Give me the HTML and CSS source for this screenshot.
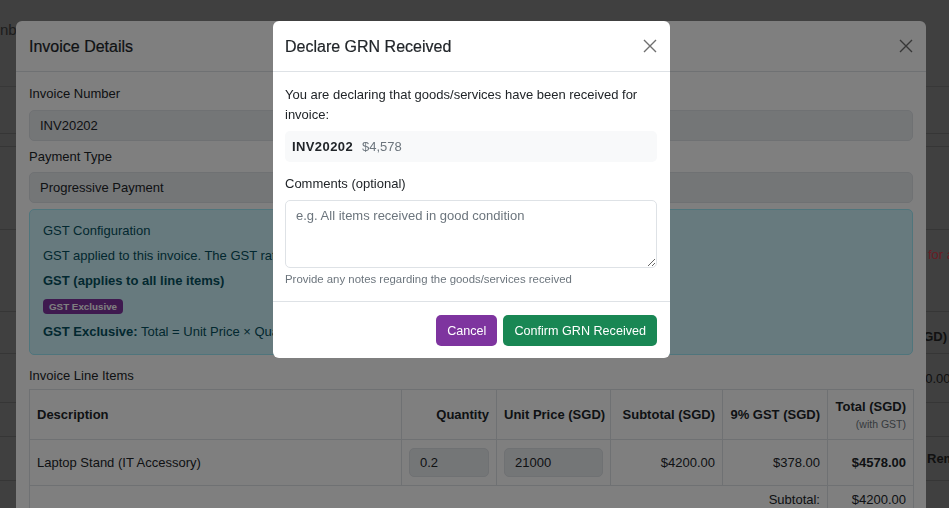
FILE: index.html
```html
<!DOCTYPE html>
<html lang="en">
<head>
<meta charset="utf-8">
<title>Declare GRN Received</title>
<link rel="stylesheet" href="styles.css">
</head>
<body>
  <div class="page">
    <div class="prow prow-a"><span class="page-head">nber</span></div>
    <div class="prow prow-b"></div>
    <div class="prow prow-c"></div>
    <div class="prow prow-d"></div>
    <div class="prow prow-e"><span class="ptext red for-a">for all line items</span></div>
    <div class="prow prow-f"><span class="ptext bold sgd">Total (SGD)</span></div>
    <div class="prow prow-g"><span class="ptext zero">$0.00</span></div>
    <div class="prow prow-h"></div>
    <div class="prow prow-i"><span class="ptext bold rem">Remaining</span></div>
    <div class="prow prow-j"></div>
  </div>

  <div class="modal modal-invoice">
    <div class="modal-header">
      <h5 class="modal-title">Invoice Details</h5>
      <svg class="btn-close" viewBox="0 0 14 14" width="14" height="14" aria-hidden="true"><path d="M1 1L13 13M13 1L1 13"/></svg>
    </div>
    <div class="inv-body">
      <div class="form-group">
        <div class="form-label">Invoice Number</div>
        <div class="form-input">INV20202</div>
      </div>
      <div class="form-group">
        <div class="form-label">Payment Type</div>
        <div class="form-input">Progressive Payment</div>
      </div>
      <div class="alert-info">
        <div class="alert-line">GST Configuration</div>
        <div class="alert-line">GST applied to this invoice. The GST rate is 9%.</div>
        <div class="alert-line bold">GST (applies to all line items)</div>
        <div class="badge-row"><span class="badge">GST Exclusive</span></div>
        <div class="alert-line last"><b>GST Exclusive:</b> Total = Unit Price × Quantity + GST</div>
      </div>
      <div class="section-label">Invoice Line Items</div>
      <table class="items">
        <colgroup>
          <col class="c-desc"><col class="c-qty"><col class="c-unit"><col class="c-sub"><col class="c-gst"><col class="c-tot">
        </colgroup>
        <thead>
          <tr>
            <th class="left">Description</th>
            <th>Quantity</th>
            <th>Unit Price (SGD)</th>
            <th>Subtotal (SGD)</th>
            <th>9% GST (SGD)</th>
            <th>Total (SGD)<div class="th-sub">(with GST)</div></th>
          </tr>
        </thead>
        <tbody>
          <tr class="item-row">
            <td class="left">Laptop Stand (IT Accessory)</td>
            <td><div class="cell-input">0.2</div></td>
            <td><div class="cell-input">21000</div></td>
            <td>$4200.00</td>
            <td>$378.00</td>
            <td class="bold">$4578.00</td>
          </tr>
          <tr class="sum-row">
            <td colspan="5">Subtotal:</td>
            <td>$4200.00</td>
          </tr>
        </tbody>
      </table>
    </div>
  </div>

  <div class="backdrop"></div>

  <div class="modal modal-grn">
    <div class="modal-header">
      <h5 class="modal-title">Declare GRN Received</h5>
      <svg class="btn-close" viewBox="0 0 14 14" width="14" height="14" aria-hidden="true"><path d="M1 1L13 13M13 1L1 13"/></svg>
    </div>
    <div class="grn-body">
      <p class="grn-intro">You are declaring that goods/services have been received for invoice:</p>
      <div class="invoice-box"><b>INV20202</b><span class="amount">$4,578</span></div>
      <label class="grn-label" for="comments">Comments (optional)</label>
      <textarea id="comments" class="grn-textarea" placeholder="e.g. All items received in good condition"></textarea>
      <div class="form-text">Provide any notes regarding the goods/services received</div>
    </div>
    <div class="grn-footer">
      <button class="btn btn-cancel" type="button">Cancel</button>
      <button class="btn btn-confirm" type="button">Confirm GRN Received</button>
    </div>
  </div>
</body>
</html>
```

FILE: styles.css
```css
html, body {
  margin: 0;
  padding: 0;
}
body {
  width: 949px;
  height: 508px;
  overflow: hidden;
  background: #808080;
  font-family: "Liberation Sans", Arial, Helvetica, sans-serif;
  font-size: 13px;
  line-height: 19.5px;
  color: #212529;
}

/* underlying page (already dimmed by first backdrop) */
.page {
  display: flex;
  flex-direction: column;
}
.prow {
  border-bottom: 1px solid #6c6c6c;
  white-space: nowrap;
  overflow: hidden;
  box-sizing: border-box;
}
.prow-a { height: 87px; padding-top: 20px; border-bottom-color: #707070; }
.prow-b { height: 47px; }
.prow-c { height: 13px; }
.prow-d { height: 83px; }
.prow-e { height: 82px; padding-top: 15px; }
.prow-f { height: 42px; padding-top: 15px; text-align: right; padding-right: 2px; }
.prow-g { height: 49px; padding-top: 15px; }
.prow-h { height: 34px; }
.prow-i { height: 44px; padding-top: 12px; }
.prow-j { height: 40px; }
.page-head { font-size: 15px; color: #3a3a3a; }
.ptext { color: #222; }
.red { color: #d23a48; }
.bold { font-weight: bold; }
.for-a { padding-left: 928px; }
.zero { padding-left: 918px; }
.rem { padding-left: 927px; }

/* modal windows */
.modal {
  position: absolute;
  top: 21px;
  background: #fff;
  border-radius: 6px;
  overflow: hidden;
}
.modal-invoice {
  left: 16px;
  width: 910px;
  height: 520px;
}
.modal-grn {
  left: 273px;
  width: 397px;
}
.backdrop {
  position: fixed;
  inset: 0;
  background: rgba(0, 0, 0, 0.5);
}
.modal-header {
  height: 50px;
  border-bottom: 1px solid #dee2e6;
  display: flex;
  align-items: center;
  justify-content: space-between;
  padding: 0 13px;
}
.modal-grn .modal-header { padding-left: 12px; }
.modal-title {
  margin: 0;
  font-size: 16px;
  font-weight: normal;
  line-height: 19px;
  color: #212529;
  -webkit-text-stroke: 0.2px #212529;
}
.btn-close {
  display: block;
  fill: none;
  stroke: #6f6f6f;
  stroke-width: 1.4;
}

/* invoice details body */
.inv-body {
  padding: 12px 13px 13px;
}
.form-group {
  margin-bottom: 6px;
}
.form-label {
  margin-bottom: 6px;
}
.form-input {
  height: 31px;
  box-sizing: border-box;
  border: 1px solid #dee2e6;
  border-radius: 5px;
  background: #e9ecef;
  padding: 5px 10px;
  line-height: 19px;
}
.alert-info {
  background: #cff4fc;
  border: 1px solid #9eeaf9;
  border-radius: 5px;
  color: #055160;
  padding: 11px 13px 13px;
}
.alert-line {
  margin-bottom: 5.5px;
}
.alert-line.last { margin-bottom: 0; }
.badge-row {
  margin-top: 8.5px;
  margin-bottom: 7.5px;
  height: 15px;
  display: flex;
}
.badge {
  display: inline-block;
  height: 15px;
  line-height: 15px;
  padding: 0 6px;
  border-radius: 4px;
  background: #7e349f;
  color: #fff;
  font-size: 9.8px;
  font-weight: bold;
}
.section-label {
  margin-top: 11px;
  margin-bottom: 3px;
}
.items {
  width: 884px;
  border-collapse: collapse;
  table-layout: fixed;
  border: 1px solid #dee2e6;
}
.c-desc { width: 372px; }
.c-qty { width: 95px; }
.c-unit { width: 114px; }
.c-sub { width: 112px; }
.c-gst { width: 105px; }
.c-tot { width: 86px; }
.items th, .items td {
  border: 1px solid #dee2e6;
  padding: 7px;
  text-align: right;
  vertical-align: middle;
  white-space: nowrap;
}
.items th {
  font-weight: bold;
  height: 35px;
}
.items .left { text-align: left; }
.th-sub {
  font-weight: normal;
  font-size: 10.5px;
  line-height: 16px;
  color: #6c757d;
}
.item-row td { padding-top: 8px; padding-bottom: 8px; }
.cell-input {
  height: 29px;
  box-sizing: border-box;
  border: 1px solid #dee2e6;
  border-radius: 5px;
  background: #e9ecef;
  padding: 4px 10px;
  line-height: 19px;
  text-align: left;
}
.sum-row td { padding-top: 4px; padding-bottom: 4px; }

/* GRN modal body */
.grn-body {
  padding: 13px 13px 13px 12px;
}
.grn-intro {
  margin: 0 0 6.5px;
}
.invoice-box {
  background: #f8f9fa;
  border-radius: 5px;
  height: 31px;
  box-sizing: border-box;
  padding: 6px 7px;
  line-height: 19px;
  display: flex;
}
.invoice-box b { letter-spacing: 0.4px; }
.amount {
  margin-left: 9px;
  color: #6c757d;
}
.grn-label {
  display: block;
  margin-top: 12px;
  margin-bottom: 7px;
}
.grn-textarea {
  display: block;
  width: 100%;
  height: 68px;
  box-sizing: border-box;
  border: 1px solid #dee2e6;
  border-radius: 5px;
  padding: 5px 10px;
  font-family: "Liberation Sans", Arial, Helvetica, sans-serif;
  font-size: 13px;
  line-height: 19.5px;
  color: #212529;
  resize: vertical;
  margin: 0;
}
.grn-textarea::placeholder {
  color: #6c757d;
  opacity: 1;
}
.form-text {
  margin-top: 3px;
  font-size: 11.4px;
  line-height: 17px;
  color: #6c757d;
}
.grn-footer {
  border-top: 1px solid #dee2e6;
  padding: 13px 13px 12px;
  display: flex;
  justify-content: flex-end;
  gap: 6px;
}
.btn {
  height: 31px;
  box-sizing: border-box;
  border: 0;
  border-radius: 5px;
  padding: 0 11px;
  font-family: "Liberation Sans", Arial, Helvetica, sans-serif;
  font-size: 12.6px;
  color: #fff;
  cursor: pointer;
}
.btn-cancel { background: #7e349f; }
.btn-confirm { background: #198754; }
```
